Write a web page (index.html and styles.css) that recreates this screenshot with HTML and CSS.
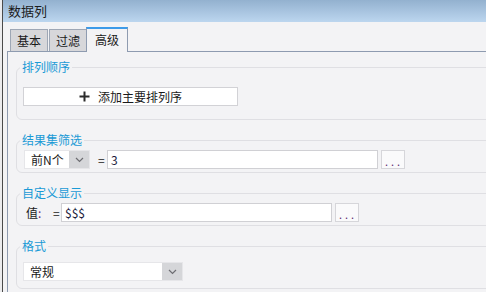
FILE: index.html
```html
<!DOCTYPE html>
<html lang="zh">

<head>
    <meta charset="UTF-8">
    <meta name="viewport" content="width=device-width, initial-scale=1.0">
    <title>数据列</title>
    <link rel="stylesheet" href="styles.css">
</head>

<body>
    <div class="window">
        <div class="titlebar">数据列</div>
        <div class="main">
            <div class="tabs">
                <div class="tab">基本</div>
                <div class="tab">过滤</div>
                <div class="tab active">高级</div>
            </div>
            <div class="panel">
                <!-- sort order -->
                <fieldset class="group group-sort">
                    <legend>排列顺序</legend>
                    <button class="add-btn">
                        <svg class="plus" width="11" height="11" viewBox="0 0 11 11">
                            <path d="M5.5 0.5V10.5M0.5 5.5H10.5" stroke="#2b2b2b" stroke-width="2" fill="none"/>
                        </svg>
                        <span>添加主要排列序</span>
                    </button>
                </fieldset>

                <!-- result filter -->
                <fieldset class="group group-filter">
                    <legend>结果集筛选</legend>
                    <div class="row">
                        <div class="combo combo-top">
                            <span class="combo-text">前N个</span>
                            <span class="arrow">
                                <svg width="9" height="6" viewBox="0 0 9 6"><polyline points="1,1 4.5,4.5 8,1" stroke="#6d6d72" stroke-width="1.2" fill="none"/></svg>
                            </span>
                        </div>
                        <span class="eq eq-filter">=</span>
                        <div class="input">3</div>
                        <div class="dots">...</div>
                    </div>
                </fieldset>

                <!-- custom display -->
                <fieldset class="group group-display">
                    <legend>自定义显示</legend>
                    <div class="row">
                        <span class="lbl">值<span class="colon">:</span></span>
                        <span class="eq">=</span>
                        <div class="input">$$$</div>
                        <div class="dots">...</div>
                    </div>
                </fieldset>

                <!-- format -->
                <fieldset class="group group-format">
                    <legend>格式</legend>
                    <div class="combo combo-format">
                        <span class="combo-text">常规</span>
                        <span class="arrow">
                            <svg width="9" height="6" viewBox="0 0 9 6"><polyline points="1,1 4.5,4.5 8,1" stroke="#6d6d72" stroke-width="1.2" fill="none"/></svg>
                        </span>
                    </div>
                </fieldset>
            </div>
        </div>
    </div>
</body>

</html>
```

FILE: styles.css
```css
* {
    box-sizing: border-box;
}

html,
body {
    margin: 0;
    height: 100%;
    overflow: hidden;
}

body {
    background-color: #ececee;
    font-family: "Noto Sans CJK SC", "Noto Sans", sans-serif;
    font-size: 12px;
    color: #1a1a1a;
}

.window {
    margin-left: 2px;
    height: 100%;
    overflow: hidden;
    border-left: 1px solid #4a4a4a;
    background-color: #f3f3f5;
}

.titlebar {
    height: 22px;
    line-height: 22px;
    padding-left: 5px;
    font-size: 13px;
    color: #1c1c1c;
    background: linear-gradient(#93b1cf, #bcd6ef);
}

.main {
    padding-left: 4px;
}

/* tabs */

.tabs {
    display: flex;
    align-items: flex-end;
    height: 29px;
    padding-left: 3px;
}

.tab {
    height: 22px;
    line-height: 21px;
    padding: 0 6px;
    margin-right: 1px;
    border: 1px solid #9ea7b5;
    border-bottom: none;
    background-color: #d7d7da;
    color: #1a1a1a;
}

.tab.active {
    position: relative;
    z-index: 1;
    height: 25px;
    margin-left: -2px;
    margin-bottom: -1px;
    padding: 0 8px;
    border-color: #8e9bb0;
    border-top: 2px solid #3d9be9;
    background-color: #f3f3f5;
}

.panel {
    overflow: hidden;
    border-top: 1px solid #8e9bb0;
    border-left: 1px solid #8e9bb0;
    padding: 7px 0 0 8px;
}

/* group boxes */

.group {
    margin: 0 -40px 12px 0;
    min-width: 0;
    border: 1px solid #dfdfe3;
    border-radius: 6px;
    padding: 0 0 0 6px;
}

.group legend {
    margin-left: -3px;
    padding: 0 2px;
    font-size: 12px;
    line-height: 16px;
    color: #1a9ad6;
}

.group-sort {
    padding-top: 12px;
    padding-bottom: 13px;
}

.group-filter {
    padding-top: 2px;
    padding-bottom: 3px;
}

.group-display {
    padding-top: 2px;
    padding-bottom: 3px;
}

.group-format {
    padding-top: 8px;
    padding-bottom: 7px;
}

.add-btn {
    display: flex;
    align-items: center;
    justify-content: center;
    width: 215px;
    height: 19px;
    margin: 0;
    padding: 0;
    border: 1px solid #d2d2d6;
    background-color: #fff;
    font-family: inherit;
    font-size: 12px;
    color: #1a1a1a;
}

.plus {
    margin-right: 8px;
}

.row {
    display: flex;
    align-items: center;
    height: 19px;
}

.combo {
    display: flex;
    height: 19px;
    border: 1px solid #e6e6e9;
    background-color: #fff;
}

.combo-text {
    flex: 1;
    padding-left: 6px;
    line-height: 17px;
}

.arrow {
    display: flex;
    align-items: center;
    justify-content: center;
    width: 20px;
    background-color: #d5d6d9;
}

.combo-top {
    width: 66px;
    margin-left: 1px;
}

.combo-format {
    width: 160px;
}

.eq {
    width: 8px;
    line-height: 17px;
}

.eq-filter {
    margin-left: 8px;
    width: 9px;
}

.lbl {
    width: 27px;
    margin-left: 3px;
    line-height: 17px;
}

.colon {
    color: #6b2c78;
}

.input {
    width: 271px;
    height: 19px;
    padding-left: 3px;
    line-height: 17px;
    border: 1px solid #d0d0d4;
    background-color: #fff;
    color: #1c1c3c;
}

.dots {
    width: 24px;
    height: 19px;
    margin-left: 3px;
    padding-left: 2px;
    border: 1px solid #d6d6da;
    background-color: #fafafb;
    color: #5b2c6f;
    font-size: 11px;
    line-height: 20px;
    letter-spacing: 3px;
    text-align: center;
}
```
